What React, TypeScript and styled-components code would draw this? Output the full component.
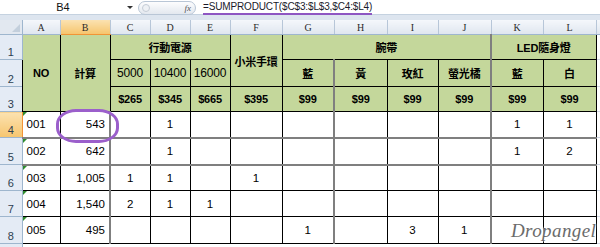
import React from "react";
import styled, { createGlobalStyle, css } from "styled-components";

const GlobalStyle = createGlobalStyle`
  html, body { margin: 0; padding: 0; background: #fff; }
  body { font-family: "Liberation Sans", "Noto Sans CJK TC", sans-serif; }
`;

const GREEN = "#c4d79b";
const GREY_LINE = "2px solid #7f7f7f";
const BLACK_LINE = "1px solid #000";

const colWidths = [22, 38, 50, 40, 40, 40, 52, 52, 53, 51, 53, 52, 53, 4];
const colLetters = ["A", "B", "C", "D", "E", "F", "G", "H", "I", "J", "K", "L"];
const rowHeights = [25, 27, 25, 26, 27, 26, 26, 27];

type BodyRow = { no: string; total: string; items: string[] };
const bodyRows: BodyRow[] = [
  { no: "001", total: "543", items: ["", "1", "", "", "", "", "", "", "1", "1"] },
  { no: "002", total: "642", items: ["", "1", "", "", "", "", "", "", "1", "2"] },
  { no: "003", total: "1,005", items: ["1", "1", "", "1", "", "", "", "", "", ""] },
  { no: "004", total: "1,540", items: ["2", "1", "1", "", "", "", "", "", "", ""] },
  { no: "005", total: "495", items: ["", "", "", "", "1", "", "3", "1", "", ""] },
];

// item columns (C..L) that carry the heavy grey right-hand rule
const greyRightCols = [4, 7];

const Window = styled.div`
  position: relative;
  width: 600px;
  height: 247px;
  overflow: hidden;
  background: #dde5ef;
`;

const FormulaBar = styled.div`
  display: flex;
  align-items: center;
  height: 15px;
  background: #fff;
  margin-bottom: 5px;
  border-bottom: 1px solid #c5d2e0;
  box-sizing: border-box;
`;

const NameBox = styled.div`
  width: 126px;
  text-align: center;
  font-size: 11px;
  color: #111;
  line-height: 14px;
`;

const DropArrow = styled.div`
  width: 0;
  height: 0;
  margin: 0 5px 0 1px;
  border-left: 3px solid transparent;
  border-right: 3px solid transparent;
  border-top: 3px solid #333;
`;

const FxPill = styled.div`
  display: flex;
  align-items: center;
  justify-content: space-between;
  width: 58px;
  height: 14px;
  margin-top: 1px;
  padding: 0 4px 0 3px;
  box-sizing: border-box;
  border: 1px solid #b9c6d6;
  border-radius: 8px;
  background: linear-gradient(#fdfdfe, #e3e8ef);
`;

const PillDot = styled.span`
  width: 6px;
  height: 6px;
  border-radius: 50%;
  border: 1px solid #c4ccd6;
  background: #eef1f5;
`;

const FxMark = styled.span`
  font-family: "Liberation Serif", serif;
  font-style: italic;
  font-size: 9px;
  color: #555;
`;

const FormulaText = styled.span`
  margin-left: 7px;
  font-size: 10px;
  letter-spacing: -0.15px;
  color: #1a1a2a;
  line-height: 12px;
  padding-top: 1px;
  border-bottom: 2px solid #8e56c2;
`;

const Sheet = styled.table`
  border-collapse: collapse;
  table-layout: fixed;
  width: 600px;
  background: #fff;
`;

const ColHead = styled.th<{ $active?: boolean }>`
  background: ${(p) =>
    p.$active
      ? "linear-gradient(#fbe2b1, #f6c56e)"
      : "linear-gradient(#f4f7fb, #dfe6ef)"};
  height: 14px;
  padding: 0;
  font-family: "Liberation Serif", serif;
  font-weight: normal;
  font-size: 10px;
  color: #2a2a2a;
  border-right: 1px solid #b7c6d8;
  border-bottom: 1px solid ${(p) => (p.$active ? "#f29436" : "#9eb6ce")};
`;

const Corner = styled.th`
  position: relative;
  padding: 0;
  background: #e2e8f0;
  border-right: 1px solid #9eb6ce;
  border-bottom: 1px solid #9eb6ce;
  &::after {
    content: "";
    position: absolute;
    right: 2px;
    bottom: 2px;
    border-left: 8px solid transparent;
    border-bottom: 8px solid #c3cfdc;
  }
`;

const RowHead = styled.th<{ $active?: boolean }>`
  background: ${(p) =>
    p.$active ? "linear-gradient(#fbe2b1, #f6c56e)" : "#e4ebf5"};
  padding: 0 0 1px 0;
  vertical-align: bottom;
  font-weight: normal;
  font-size: 11px;
  color: #2c3e50;
  border-bottom: 1px solid #9eb6ce;
  border-right: 1px solid ${(p) => (p.$active ? "#f29436" : "#9eb6ce")};
`;

const Head = styled.td<{ $bold?: boolean; $thickRight?: boolean }>`
  background: ${GREEN};
  padding: 0;
  text-align: center;
  vertical-align: middle;
  font-size: ${(p) => (p.$bold ? "11px" : "12px")};
  font-weight: ${(p) => (p.$bold ? "bold" : "normal")};
  color: #000;
  white-space: nowrap;
  letter-spacing: -0.2px;
  border: ${BLACK_LINE};
  ${(p) => p.$thickRight && `border-right: ${GREY_LINE};`}
`;

const Cell = styled.td<{
  $align?: "left" | "right" | "center";
  $thickRight?: boolean;
  $thickBottom?: boolean;
  $flag?: boolean;
}>`
  position: relative;
  padding: 0 4px;
  font-size: 11.5px;
  color: #000;
  text-align: ${(p) => p.$align ?? "center"};
  vertical-align: middle;
  white-space: nowrap;
  border: ${BLACK_LINE};
  ${(p) => p.$thickRight && `border-right: ${GREY_LINE};`}
  ${(p) => p.$thickBottom && `border-bottom: ${GREY_LINE};`}
  ${(p) =>
    p.$flag &&
    css`
      &::before {
        content: "";
        position: absolute;
        left: 0;
        top: 0;
        border-top: 4px solid #2e8b2e;
        border-right: 4px solid transparent;
      }
    `}
`;

const Spare = styled.td`
  padding: 0;
  border-bottom: 1px solid #d0d7e5;
`;

const Highlight = styled.div`
  position: absolute;
  left: 56px;
  top: 109px;
  width: 57px;
  height: 28px;
  border: 3px solid #9b5fcb;
  border-radius: 20px / 15px;
  pointer-events: none;
`;

const Watermark = styled.div`
  position: absolute;
  left: 511px;
  top: 220px;
  font-family: "Liberation Serif", serif;
  font-style: italic;
  font-size: 19px;
  letter-spacing: 0.4px;
  color: #6b6b6b;
  text-shadow: 0 0 2px #fff, 0 0 2px #fff;
  pointer-events: none;
`;

const App: React.FC = () => {
  return (
    <Window>
      <GlobalStyle />
      <FormulaBar>
        <NameBox>B4</NameBox>
        <DropArrow />
        <FxPill>
          <PillDot />
          <FxMark>fx</FxMark>
        </FxPill>
        <FormulaText>=SUMPRODUCT($C$3:$L$3,$C4:$L4)</FormulaText>
      </FormulaBar>

      <Sheet>
        <colgroup>
          {colWidths.map((w, i) => (
            <col key={i} style={{ width: w }} />
          ))}
        </colgroup>
        <thead>
          <tr>
            <Corner />
            {colLetters.map((l) => (
              <ColHead key={l} $active={l === "B"}>
                {l}
              </ColHead>
            ))}
            <ColHead />
          </tr>
        </thead>
        <tbody>
          <tr style={{ height: rowHeights[0] }}>
            <RowHead>1</RowHead>
            <Head rowSpan={3} $bold>NO</Head>
            <Head rowSpan={3} $bold>計算</Head>
            <Head colSpan={3} $bold>行動電源</Head>
            <Head rowSpan={2} $bold>小米手環</Head>
            <Head colSpan={4} $bold $thickRight>腕帶</Head>
            <Head colSpan={2} $bold>LED隨身燈</Head>
            <Spare />
          </tr>
          <tr style={{ height: rowHeights[1] }}>
            <RowHead>2</RowHead>
            <Head>5000</Head>
            <Head>10400</Head>
            <Head>16000</Head>
            <Head $bold $thickRight>藍</Head>
            <Head $bold>黃</Head>
            <Head $bold>玫紅</Head>
            <Head $bold $thickRight>螢光橘</Head>
            <Head $bold>藍</Head>
            <Head $bold>白</Head>
            <Spare />
          </tr>
          <tr style={{ height: rowHeights[2] }}>
            <RowHead>3</RowHead>
            {["$265", "$345", "$665", "$395", "$99", "$99", "$99", "$99", "$99", "$99"].map(
              (p, i) => (
                <Head key={i} $bold $thickRight={greyRightCols.includes(i)}>
                  {p}
                </Head>
              )
            )}
            <Spare />
          </tr>
          {bodyRows.map((r, ri) => {
            const thickBottom = ri === 0 || ri === 1;
            return (
              <tr key={r.no} style={{ height: rowHeights[ri + 3] }}>
                <RowHead $active={ri === 0}>{ri + 4}</RowHead>
                <Cell $align="left" $flag $thickBottom={thickBottom}>
                  {r.no}
                </Cell>
                <Cell $align="right" $thickRight $thickBottom={thickBottom}>
                  {r.total}
                </Cell>
                {r.items.map((v, i) => (
                  <Cell
                    key={i}
                    $thickRight={greyRightCols.includes(i)}
                    $thickBottom={thickBottom}
                  >
                    {v}
                  </Cell>
                ))}
                <Spare />
              </tr>
            );
          })}
          <tr style={{ height: 10 }}>
            <RowHead />
            {colLetters.map((l) => (
              <Spare key={l} />
            ))}
            <Spare />
          </tr>
        </tbody>
      </Sheet>

      <Highlight />
      <Watermark>Dropangel</Watermark>
    </Window>
  );
};

export default App;
